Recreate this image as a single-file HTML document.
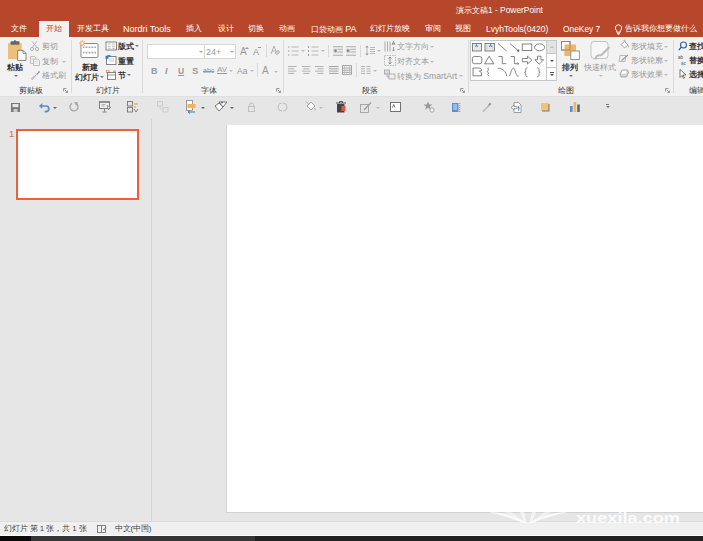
<!DOCTYPE html>
<html><head><meta charset="utf-8">
<style>
html,body{margin:0;padding:0}
body{width:703px;height:541px;overflow:hidden;position:relative;background:#E6E6E6;font-family:"Liberation Sans",sans-serif;}
.a{position:absolute}
.t{position:absolute;white-space:nowrap;font-size:8px;line-height:10px;color:#333;font-weight:600}
.t.L{font-weight:400}
.w{color:#fff}
.t.g{color:#999;font-weight:400}
.dd{position:absolute;width:0;height:0;border-left:2px solid transparent;border-right:2px solid transparent;border-top:2px solid #777}
.sep{position:absolute;width:1px;background:#DADADA}
svg{position:absolute;overflow:visible}
</style></head>
<body>
<!-- title bar -->
<div class="a" style="left:0;top:0;width:703px;height:37px;background:#B7472A"></div>
<div class="L t w" style="left:456px;top:5px;font-size:7.5px">演示文稿<span style="font-size:8.4px">1 - PowerPoint</span></div>
<!-- active tab -->
<div class="a" style="left:39px;top:21px;width:30px;height:17px;background:#F2F2F2"></div>
<div class="L t w" style="left:11px;top:24px">文件</div>
<div class="L t" style="left:46px;top:24px;color:#B7472A">开始</div>
<div class="L t w" style="left:77px;top:24px">开发工具</div>
<div class="L t w" style="left:123px;top:24px;font-size:9px">Nordri Tools</div>
<div class="L t w" style="left:186px;top:24px">插入</div>
<div class="L t w" style="left:218px;top:24px">设计</div>
<div class="L t w" style="left:248px;top:24px">切换</div>
<div class="L t w" style="left:279px;top:24px">动画</div>
<div class="L t w" style="left:311px;top:24px">口袋动画 <span style="font-size:9px;font-weight:400">PA</span></div>
<div class="L t w" style="left:370px;top:24px">幻灯片放映</div>
<div class="L t w" style="left:425px;top:24px">审阅</div>
<div class="L t w" style="left:455px;top:24px">视图</div>
<div class="L t w" style="left:486px;top:24px;font-size:8.5px">LvyhTools(0420)</div>
<div class="L t w" style="left:563px;top:24px;font-size:8.4px">OneKey 7</div>
<div class="L t w" style="left:625px;top:24px">告诉我你想要做什么</div>

<!-- ribbon -->
<div class="a" style="left:0;top:37px;width:703px;height:59px;background:#F2F2F2"></div>
<div class="a" style="left:0;top:96px;width:703px;height:1px;background:#E0E0E0"></div>


<svg style="left:614px;top:24px" width="9" height="11" viewBox="0 0 9 11"><path d="M4.5 0.8a3.2 3.2 0 0 0-1.8 5.8v1.6h3.6v-1.6a3.2 3.2 0 0 0-1.8-5.8z" fill="none" stroke="#fff" stroke-width="1"/><path d="M3 9.3h3M3.5 10.3h2" stroke="#fff" stroke-width="0.9"/></svg>

<!-- ===== Clipboard group ===== -->
<svg style="left:7px;top:40px" width="21" height="21" viewBox="0 0 21 21">
 <rect x="1" y="3.2" width="13.8" height="16" fill="#EAC07A"/>
 <rect x="3.5" y="1.2" width="9" height="3.5" rx="0.8" fill="#666"/>
 <circle cx="8" cy="1.5" r="1.3" fill="#666"/>
 <path d="M10.7 10.4h5.3l3 3v7h-8.3z" fill="#fff" stroke="#666" stroke-width="0.8"/>
 <path d="M16 10.4v3h3" fill="none" stroke="#666" stroke-width="0.7"/>
</svg>
<div class="t" style="left:7px;top:63px">粘贴</div>
<div class="dd" style="left:14px;top:75px"></div>
<svg style="left:30px;top:41px" width="9" height="10" viewBox="0 0 9 10"><path d="M2 0.3l4.8 6.2M7 0.3l-4.8 6.2" stroke="#aaa" stroke-width="0.9" fill="none"/><circle cx="2" cy="8" r="1.6" fill="none" stroke="#aaa" stroke-width="0.9"/><circle cx="7" cy="8" r="1.6" fill="none" stroke="#aaa" stroke-width="0.9"/></svg>
<div class="t g" style="left:42px;top:42px">剪切</div>
<svg style="left:30px;top:56px" width="10" height="10" viewBox="0 0 10 10"><path d="M0.5 0.5h4l1.5 1.5v5.5h-5.5z" fill="#f4f4f4" stroke="#b0b0b0" stroke-width="0.8"/><path d="M1.5 2.5h2M1.5 4h2" stroke="#ccc" stroke-width="0.6"/><path d="M3.5 3h4.5l1.5 1.5v5h-6z" fill="#f4f4f4" stroke="#b0b0b0" stroke-width="0.8"/><path d="M4.5 5.5h3.5M4.5 7h3.5" stroke="#ccc" stroke-width="0.6"/></svg>
<div class="t g" style="left:42px;top:57px">复制</div>
<div class="dd" style="left:62px;top:61px;border-top-color:#bbb"></div>
<svg style="left:31px;top:71px" width="9" height="9" viewBox="0 0 9 9"><path d="M0.5 8.5l3.5-3.5" stroke="#c0c0c0" stroke-width="2"/><path d="M4 5l1.5-1.5M5 2.5l1.5 1.5" stroke="#aaa" stroke-width="1"/><path d="M6 3l2.5-2.5" stroke="#999" stroke-width="1.1"/><circle cx="8" cy="1" r="0.7" fill="#999"/></svg>
<div class="t g" style="left:42px;top:71px">格式刷</div>
<div class="t" style="left:19px;top:86px;color:#3a3a3a;font-weight:400">剪贴板</div>
<svg style="left:63px;top:88px" width="5" height="5" viewBox="0 0 5 5"><path d="M0.5 0.5h3M0.5 0.5v3M1.5 1.5l3 3M4.5 2.5v2h-2" stroke="#888" stroke-width="0.8" fill="none"/></svg>
<div class="sep" style="left:71px;top:40px;height:53px"></div>

<!-- ===== Slides group ===== -->
<svg style="left:78px;top:39px" width="22" height="20" viewBox="0 0 22 20">
 <rect x="3" y="4.5" width="17" height="14" rx="1.2" fill="#fff" stroke="#8a8a8a" stroke-width="1"/>
 <path d="M5 8.3h13" stroke="#aaa" stroke-width="1.6" stroke-dasharray="1 0.5"/>
 <path d="M5 13.6h13" stroke="#aaa" stroke-width="1.6" stroke-dasharray="1 0.5"/>
 <path d="M4.3 1v6.5M1 4.3h6.5M2 2l4.6 4.6M6.6 2l-4.6 4.6" stroke="#F0A060" stroke-width="0.8"/>
 <circle cx="4.3" cy="4.3" r="1.5" fill="#fff" stroke="#F0A060" stroke-width="0.7"/>
</svg>
<div class="t" style="left:82px;top:63px">新建</div>
<div class="t" style="left:75px;top:73px">幻灯片</div>
<div class="dd" style="left:100px;top:76px"></div>
<div class="t" style="left:96px;top:86px;color:#3a3a3a;font-weight:400">幻灯片</div>
<svg style="left:105px;top:41px" width="12" height="10" viewBox="0 0 12 10"><rect x="1" y="1" width="10.5" height="8" fill="#fff" stroke="#777" stroke-width="0.9"/><path d="M2.8 3h3M2.8 5.2h3M2.8 7.2h3M7 3h3M7 5.2h3M7 7.2h3" stroke="#aaa" stroke-width="0.8"/></svg>
<div class="t" style="left:118px;top:42px">版式</div>
<div class="dd" style="left:135px;top:45px"></div>
<svg style="left:105px;top:55px" width="12" height="10" viewBox="0 0 12 10"><rect x="1.5" y="1.5" width="9.5" height="8" fill="#fff" stroke="#777" stroke-width="0.9"/><path d="M4 4h5M4 6h5" stroke="#bbb" stroke-width="0.8"/><rect x="0.5" y="0.8" width="3" height="3" fill="#3C7CC4"/><path d="M2 1.5a3 3 0 0 1 4 0" stroke="#3C7CC4" stroke-width="1.2" fill="none"/></svg>
<div class="t" style="left:118px;top:57px">重置</div>
<svg style="left:106px;top:70px" width="11" height="10" viewBox="0 0 11 10"><rect x="0.5" y="0.3" width="2.5" height="2.5" fill="none" stroke="#E8946B" stroke-width="0.7"/><rect x="7" y="0.5" width="3" height="2" fill="#F0B050"/><rect x="1.5" y="2.5" width="8" height="7" fill="#fff" stroke="#777" stroke-width="0.9"/><path d="M1.5 5h8" stroke="#777" stroke-width="0.8"/></svg>
<div class="t" style="left:118px;top:71px">节</div>
<div class="dd" style="left:127px;top:74px"></div>
<div class="sep" style="left:142px;top:40px;height:53px"></div>

<!-- ===== Font group ===== -->
<div class="a" style="left:147px;top:44px;width:58px;height:15px;background:#fff;border:1px solid #D6D6D6;box-sizing:border-box"></div>
<div class="dd" style="left:199px;top:51px;border-top-color:#aaa"></div>
<div class="a" style="left:204px;top:44px;width:32px;height:15px;background:#fff;border:1px solid #D6D6D6;box-sizing:border-box"></div>
<div class="L t g" style="left:206px;top:47px;font-size:9px">24+</div>
<div class="dd" style="left:230px;top:51px;border-top-color:#aaa"></div>
<div class="L t g" style="left:240px;top:47px;font-size:10px">A</div><div class="dd" style="left:245px;top:47px;border-top:none;border-bottom:2px solid #999"></div>
<div class="L t g" style="left:253px;top:47px;font-size:9px">A</div><div class="a" style="left:258px;top:47px;width:3px;height:1px;background:#999"></div>
<div class="sep" style="left:266px;top:44px;height:13px"></div>
<svg style="left:270px;top:45px" width="10" height="11" viewBox="0 0 10 11"><path d="M1 9l3-8 3 8M2 6h4" stroke="#aaa" stroke-width="0.9" fill="none"/><path d="M5 8l3-3 2 2-3 3z" fill="#ccc" stroke="#aaa" stroke-width="0.6"/></svg>
<div class="t g" style="left:151px;top:66px;font-weight:bold;font-size:9px">B</div>
<div class="t g" style="left:165px;top:66px;font-style:italic;font-weight:bold;font-size:9px">I</div>
<div class="t g" style="left:178px;top:66px;text-decoration:underline;font-weight:bold;font-size:8.5px">U</div>
<div class="t g" style="left:192px;top:66px;font-weight:bold;font-size:9.5px">S</div>
<div class="L t g" style="left:203px;top:66px;font-size:7px;text-decoration:line-through">abc</div>
<div class="L t g" style="left:217px;top:65px;font-size:8px;text-decoration:underline">AV</div>
<div class="dd" style="left:229px;top:70px;border-top-color:#bbb"></div>
<div class="L t g" style="left:237px;top:66px;font-size:8.5px">Aa</div>
<div class="dd" style="left:250px;top:70px;border-top-color:#bbb"></div>
<div class="sep" style="left:257px;top:63px;height:14px"></div>
<div class="L t g" style="left:262px;top:66px;font-size:10px">A</div>
<div class="dd" style="left:274px;top:71px;border-top-color:#bbb"></div>
<div class="t" style="left:201px;top:86px;color:#3a3a3a;font-weight:400">字体</div>
<svg style="left:276px;top:88px" width="5" height="5" viewBox="0 0 5 5"><path d="M0.5 0.5h3M0.5 0.5v3M1.5 1.5l3 3M4.5 2.5v2h-2" stroke="#888" stroke-width="0.8" fill="none"/></svg>
<div class="sep" style="left:283px;top:40px;height:53px"></div>


<!-- ===== Paragraph group ===== -->
<svg style="left:288px;top:46px" width="11" height="10" viewBox="0 0 11 10"><path d="M0 1h1.5M0 5h1.5M0 9h1.5" stroke="#999" stroke-width="1.1"/><path d="M3.5 1h7M3.5 5h7M3.5 9h7" stroke="#aaa" stroke-width="0.8"/></svg>
<div class="dd" style="left:301px;top:50px;border-top-color:#bbb"></div>
<svg style="left:308px;top:46px" width="11" height="10" viewBox="0 0 11 10"><path d="M0.5 0v2M0.5 4v2M0.5 8v2" stroke="#999" stroke-width="1"/><path d="M3.5 1h7M3.5 5h7M3.5 9h7" stroke="#aaa" stroke-width="0.8"/></svg>
<div class="dd" style="left:321px;top:50px;border-top-color:#bbb"></div>
<div class="sep" style="left:328px;top:45px;height:12px"></div>
<svg style="left:333px;top:46px" width="10" height="10" viewBox="0 0 10 10"><rect x="0" y="0" width="10" height="10" fill="#ECECEC"/><path d="M0 0.7h10M4.5 3.3h5.5M4.5 6h5.5M0 9.3h10" stroke="#aaa" stroke-width="0.9"/><circle cx="2.2" cy="4.7" r="2" fill="#bbb"/><path d="M3.3 3.2l-2 1.5 2 1.5z" fill="#777"/></svg>
<svg style="left:346px;top:46px" width="10" height="10" viewBox="0 0 10 10"><rect x="0" y="0" width="10" height="10" fill="#ECECEC"/><path d="M0 0.7h10M4.5 3.3h5.5M4.5 6h5.5M0 9.3h10" stroke="#aaa" stroke-width="0.9"/><circle cx="2.2" cy="4.7" r="2" fill="#bbb"/><path d="M1.2 3.2l2 1.5-2 1.5z" fill="#777"/></svg>
<div class="sep" style="left:360px;top:45px;height:12px"></div>
<svg style="left:365px;top:45px" width="10" height="11" viewBox="0 0 10 11"><path d="M2 1v9" stroke="#aaa" stroke-width="0.9"/><path d="M0.3 2.5l1.7-2 1.7 2zM0.3 8.5l1.7 2 1.7-2z" fill="#999"/><path d="M5 2.5h5M5 4.5h5M5 6.5h5M5 8.5h5" stroke="#aaa" stroke-width="0.8"/></svg>
<div class="dd" style="left:377px;top:50px;border-top-color:#bbb"></div>
<svg style="left:288px;top:66px" width="9" height="8" viewBox="0 0 9 8"><path d="M0 0.5h8.5M0 2.8h6M0 5.1h8.5M0 7.4h6" stroke="#aaa" stroke-width="0.9"/></svg>
<svg style="left:302px;top:66px" width="9" height="8" viewBox="0 0 9 8"><path d="M0 0.5h8.5M1.3 2.8h6M0 5.1h8.5M1.3 7.4h6" stroke="#aaa" stroke-width="0.9"/></svg>
<svg style="left:315px;top:66px" width="9" height="8" viewBox="0 0 9 8"><path d="M0 0.5h8.5M2.5 2.8h6M0 5.1h8.5M2.5 7.4h6" stroke="#aaa" stroke-width="0.9"/></svg>
<svg style="left:329px;top:66px" width="10" height="8" viewBox="0 0 10 8"><path d="M0 0.5h9.5M0 2.8h9.5M0 5.1h9.5M0 7.4h9.5" stroke="#999" stroke-width="0.9"/></svg>
<svg style="left:342px;top:65px" width="10" height="10" viewBox="0 0 10 10"><rect x="0.5" y="0.5" width="9" height="9" fill="#eee" stroke="#999" stroke-width="0.8"/><path d="M0.5 3h9M0.5 5.2h9M0.5 7.4h9" stroke="#999" stroke-width="0.8"/><path d="M2.5 0v10M7.5 0v10" stroke="#bbb" stroke-width="0.7"/></svg>
<div class="sep" style="left:356px;top:63px;height:14px"></div>
<svg style="left:361px;top:66px" width="10" height="8" viewBox="0 0 10 8"><path d="M0 0.5h4M0 2.8h4M0 5.1h4M0 7.4h4M5.5 0.5h4M5.5 2.8h4M5.5 5.1h4M5.5 7.4h4" stroke="#aaa" stroke-width="0.9"/></svg>
<div class="dd" style="left:373px;top:70px;border-top-color:#bbb"></div>
<svg style="left:384px;top:41px" width="12" height="11" viewBox="0 0 12 11"><path d="M1 0.5v10M3.5 0.5v10M6 0.5v10" stroke="#999" stroke-width="0.8"/><path d="M8 4l1.5-3.5 1.5 3.5M8.5 3h2" stroke="#777" stroke-width="0.8" fill="none"/><path d="M9.5 6v4M8.3 8.8l1.2 1.2 1.2-1.2" stroke="#777" stroke-width="0.7" fill="none"/></svg>
<div class="t g" style="left:397px;top:42px">文字方向</div>
<div class="dd" style="left:430px;top:46px;border-top-color:#bbb"></div>
<svg style="left:384px;top:55px" width="12" height="11" viewBox="0 0 12 11"><rect x="0.5" y="0.5" width="11" height="10" fill="none" stroke="#aaa" stroke-width="0.8" stroke-dasharray="1.5 1"/><path d="M6 2v7M4.5 3.5l1.5-1.5 1.5 1.5M4.5 7.5l1.5 1.5 1.5-1.5" stroke="#777" stroke-width="0.8" fill="none"/></svg>
<div class="t g" style="left:397px;top:57px">对齐文本</div>
<div class="dd" style="left:430px;top:61px;border-top-color:#bbb"></div>
<svg style="left:384px;top:69px" width="12" height="11" viewBox="0 0 12 11"><rect x="0.5" y="1" width="5" height="4" fill="#ddd" stroke="#999" stroke-width="0.7"/><rect x="5" y="5" width="6" height="5" fill="#eee" stroke="#999" stroke-width="0.7"/><path d="M3 5v3h2" stroke="#999" stroke-width="0.7" fill="none"/></svg>
<div class="t g" style="left:397px;top:71px">转换为 <span style="font-size:8.6px;font-weight:400">SmartArt</span></div>
<div class="dd" style="left:459px;top:75px;border-top-color:#bbb"></div>
<div class="t" style="left:362px;top:86px;color:#3a3a3a;font-weight:400">段落</div>
<svg style="left:460px;top:88px" width="5" height="5" viewBox="0 0 5 5"><path d="M0.5 0.5h3M0.5 0.5v3M1.5 1.5l3 3M4.5 2.5v2h-2" stroke="#888" stroke-width="0.8" fill="none"/></svg>
<div class="sep" style="left:468px;top:40px;height:53px"></div>

<!-- ===== Drawing group ===== -->
<div class="a" style="left:470px;top:40px;width:87px;height:41px;background:#fff;border:1px solid #C6C6C6;box-sizing:border-box"></div>
<div class="a" style="left:546px;top:40px;width:11px;height:41px;background:#fff;border:1px solid #C6C6C6;box-sizing:border-box"></div>
<div class="a" style="left:547px;top:41px;width:9px;height:12px;background:#E3E3E3"></div>
<div class="a" style="left:546px;top:53px;width:11px;height:1px;background:#C6C6C6"></div>
<div class="a" style="left:546px;top:67px;width:11px;height:1px;background:#C6C6C6"></div>
<div class="dd" style="left:549.5px;top:46px;border-top:none;border-bottom:2px solid #bbb"></div>
<div class="dd" style="left:549.5px;top:60px;border-top-color:#555"></div>
<div class="a" style="left:549.5px;top:72px;width:4px;height:1px;background:#555"></div>
<div class="dd" style="left:549.5px;top:74px;border-top-color:#555"></div>
<svg style="left:471px;top:41px" width="76" height="39" viewBox="0 0 76 39">
 <g fill="none" stroke="#666" stroke-width="0.8">
  <rect x="1.4" y="2.4" width="9" height="7.6" fill="#E8E8E8"/><path d="M4.5 6l1-2.5 1 2.5" stroke="#2E75C4" stroke-width="0.9"/>
  <rect x="14" y="2.4" width="9.4" height="7.6" fill="#E8E8E8"/><path d="M18.5 6l1-2.5 1 2.5" stroke="#2E75C4" stroke-width="0.9"/><path d="M16 4v5M21.5 4v5" stroke="#bbb" stroke-width="0.6"/>
  <path d="M27 2.5l8.6 7.5"/>
  <path d="M39 2.5l8.6 7.5"/><path d="M46.2 10l1.8 0.4-0.4-1.8z" fill="#444"/>
  <rect x="51.2" y="3" width="9.6" height="6.6"/>
  <ellipse cx="68.6" cy="6.3" rx="5" ry="3.4"/>
  <rect x="1.4" y="15.5" width="9.4" height="7.2" rx="2"/>
  <path d="M13.6 22.8l4.6-7.6 4.6 7.6z"/>
  <path d="M27.5 15.5h3.8v7.2h4"/>
  <path d="M39.6 15.5h3.8v7.2h4"/><path d="M46.5 21.7l1.2 1-1.2 1" stroke-width="0.9"/>
  <path d="M51.3 17.5h5.2v-2.3l4.3 3.9-4.3 3.9v-2.3h-5.2z"/>
  <path d="M66.5 15.2h3.4v3.6h2.7l-4.4 4.4-4.4-4.4h2.7z"/>
  <path d="M2 34.8v-7.8h5.5c2 0 3 1 3 2.5l-2.2 0.6 2.2 1.5v3.2z"/>
  <path d="M17.7 26.5c-2 1.5 1 2-1 3.5s2.5 1 0.5 2.8c-1.5 1.2 1 2 1 2.5"/>
  <path d="M26.8 27.2c4.5 0 8.8 3.5 8.8 8"/>
  <path d="M38.5 35c1.5-4 2.5-8 4-8s2.5 8 4 8h1.2"/>
  <path d="M56.5 26.8c-1.8 0-1.8 1-1.8 3.2 0 1-0.6 1.3-1.2 1.3 0.6 0 1.2 0.3 1.2 1.3 0 2.2 0 3.2 1.8 3.2"/>
  <path d="M66.2 26.8c1.8 0 1.8 1 1.8 3.2 0 1 0.6 1.3 1.2 1.3-0.6 0-1.2 0.3-1.2 1.3 0 2.2 0 3.2-1.8 3.2"/>
 </g>
</svg>
<svg style="left:560px;top:40px" width="21" height="21" viewBox="0 0 21 21"><rect x="1.5" y="1.5" width="8.5" height="8.5" fill="#fff" stroke="#888" stroke-width="0.9"/><rect x="4.5" y="4.5" width="11.5" height="11.5" fill="#F2B460"/><rect x="1.5" y="1.5" width="8.5" height="8.5" fill="none" stroke="#888" stroke-width="0.9"/><rect x="10.8" y="11" width="8.5" height="8.5" fill="#fff" stroke="#888" stroke-width="0.9"/></svg>
<div class="t" style="left:562px;top:63px">排列</div>
<div class="dd" style="left:569px;top:75px"></div>
<svg style="left:590px;top:40px" width="22" height="22" viewBox="0 0 22 22"><rect x="1" y="1.5" width="17" height="17" rx="3" fill="#f7f7f7" stroke="#c4c4c4" stroke-width="1"/><path d="M11 15.5l8.5-8.5" stroke="#bbb" stroke-width="2.2"/><path d="M5.5 19.5c0-3 2-5 5.5-4" stroke="#bbb" stroke-width="2" fill="none"/></svg>
<div class="t g" style="left:584px;top:63px">快速样式</div>
<div class="dd" style="left:599px;top:75px;border-top-color:#bbb"></div>
<svg style="left:620px;top:40px" width="9" height="9" viewBox="0 0 9 9"><path d="M1 4.5l3.5-3 3.5 3.5-3.5 3z" fill="#fff" stroke="#999" stroke-width="0.9"/><path d="M3.5 0.5a1 1 0 0 1 1.5 1.5" fill="none" stroke="#999" stroke-width="0.8"/><path d="M8.3 5.5c0.5 0.8 0.6 1.4 0.2 1.8" stroke="#999" stroke-width="0.9" fill="none"/></svg>
<div class="t g" style="left:631px;top:42px">形状填充</div>
<div class="dd" style="left:664px;top:46px;border-top-color:#bbb"></div>
<svg style="left:618px;top:54px" width="11" height="9" viewBox="0 0 11 9"><path d="M2 1.5h6l-1 6h-6z" fill="none" stroke="#aaa" stroke-width="0.8"/><path d="M3.5 6.5l6.5-5.5" stroke="#999" stroke-width="1.1"/></svg>
<div class="t g" style="left:631px;top:56px">形状轮廓</div>
<div class="dd" style="left:664px;top:60px;border-top-color:#bbb"></div>
<svg style="left:619px;top:69px" width="10" height="9" viewBox="0 0 10 9"><path d="M1 5l2-4h5.5l1 2.5-2 4.5h-5.5z" fill="#d6d6d6" stroke="#999" stroke-width="0.8"/><path d="M2.2 4.5l1.5-2.8h4.3l-1.3 3z" fill="#fff"/></svg>
<div class="t g" style="left:631px;top:70px">形状效果</div>
<div class="dd" style="left:664px;top:74px;border-top-color:#bbb"></div>
<div class="t" style="left:558px;top:86px;color:#3a3a3a;font-weight:400">绘图</div>
<svg style="left:665px;top:88px" width="5" height="5" viewBox="0 0 5 5"><path d="M0.5 0.5h3M0.5 0.5v3M1.5 1.5l3 3M4.5 2.5v2h-2" stroke="#888" stroke-width="0.8" fill="none"/></svg>
<div class="sep" style="left:673px;top:40px;height:53px"></div>

<!-- ===== Editing group ===== -->
<svg style="left:678px;top:41px" width="10" height="10" viewBox="0 0 10 10"><circle cx="5.5" cy="4" r="3" fill="none" stroke="#2E62A8" stroke-width="1.1"/><path d="M3.3 6.2l-2.5 3" stroke="#2E62A8" stroke-width="1.3"/></svg>
<div class="t" style="left:689px;top:42px">查找</div>
<svg style="left:678px;top:55px" width="10" height="10" viewBox="0 0 10 10"><text x="0" y="4" font-size="4.5" fill="#444" font-family="Liberation Sans">ab</text><text x="3" y="9.5" font-size="4.5" fill="#2E62A8" font-family="Liberation Sans">ac</text></svg>
<div class="t" style="left:689px;top:56px">替换</div>
<svg style="left:679px;top:69px" width="9" height="10" viewBox="0 0 9 10"><path d="M1 0.5v8l2-2 1.5 3 1-0.5-1.5-3h3z" fill="#fff" stroke="#555" stroke-width="0.8"/></svg>
<div class="t" style="left:689px;top:70px">选择</div>
<div class="t" style="left:689px;top:86px;color:#3a3a3a;font-weight:400">编辑</div>


<!-- ===== QAT row ===== -->
<svg style="left:11px;top:103px" width="9" height="9" viewBox="0 0 9 9"><path d="M0 0h9v9h-9z" fill="#7a7a7a"/><rect x="1.5" y="1" width="6" height="3.2" fill="#e6e6e6"/><rect x="2.5" y="6" width="4" height="3" fill="#ccc"/></svg>
<svg style="left:39px;top:102px" width="11" height="11" viewBox="0 0 11 11"><path d="M2.5 4h4.5a2.8 2.8 0 0 1 0 5.6h-1.5" fill="none" stroke="#5B8BC9" stroke-width="1.7"/><path d="M0 4l3.3-3v6z" fill="#5B8BC9"/></svg>
<div class="dd" style="left:53px;top:107px;border-top-color:#666"></div>
<svg style="left:69px;top:102px" width="10" height="10" viewBox="0 0 10 10"><path d="M6.8 1.3a4 4 0 1 1-3.8 0.1" fill="none" stroke="#a8a8a8" stroke-width="1.4"/><path d="M5 0l4 0.3-1.8 3.5z" fill="#a8a8a8"/></svg>
<svg style="left:99px;top:101px" width="13" height="12" viewBox="0 0 13 12"><rect x="0.5" y="1" width="10" height="6.5" fill="#eee" stroke="#777" stroke-width="0.9"/><path d="M0 1h11" stroke="#777" stroke-width="1.2"/><path d="M2.5 3.5h4M2.5 5h3" stroke="#999" stroke-width="0.7"/><path d="M5.5 7.5v3M3.5 11h4" stroke="#777" stroke-width="0.9"/><path d="M8 4.5l4 2-2 0.5-0.5 2z" fill="#fff" stroke="#777" stroke-width="0.7"/></svg>
<svg style="left:127px;top:101px" width="12" height="12" viewBox="0 0 12 12"><rect x="0.5" y="0.5" width="5" height="4.5" fill="none" stroke="#777" stroke-width="0.9"/><rect x="0.5" y="6.5" width="5" height="4.5" fill="none" stroke="#777" stroke-width="0.9"/><path d="M7 3h4M7 6h2" stroke="#E8943B" stroke-width="1"/><path d="M7 8l2 3 2-3" stroke="#777" stroke-width="0.9" fill="none"/></svg>
<svg style="left:157px;top:101px" width="12" height="12" viewBox="0 0 12 12"><rect x="0.5" y="0.5" width="5" height="4.5" fill="none" stroke="#ccc" stroke-width="0.9"/><rect x="6" y="6.5" width="5" height="4.5" fill="none" stroke="#ccc" stroke-width="0.9"/><path d="M3 5v3h3" stroke="#ccc" stroke-width="0.8" fill="none"/></svg>
<svg style="left:185px;top:100px" width="12" height="14" viewBox="0 0 12 14"><rect x="1.5" y="0.5" width="6" height="10" fill="#fff" stroke="#888" stroke-width="0.8"/><rect x="2.5" y="4" width="8" height="4" fill="#F1B45B"/><path d="M3 12h7M3 12l2-1.5M3 12l2 1.5" stroke="#3C7CC4" stroke-width="1" fill="none"/></svg>
<div class="dd" style="left:201px;top:107px;border-top-color:#666"></div>
<svg style="left:214px;top:101px" width="14" height="12" viewBox="0 0 14 12"><path d="M5 1l8 0-4 5z" fill="#fff" stroke="#666" stroke-width="0.9"/><path d="M1 5l4-3 4 4-4 4z" fill="#fff" stroke="#666" stroke-width="0.9"/><circle cx="8" cy="1.5" r="1" fill="#3C7CC4"/></svg>
<div class="dd" style="left:230px;top:107px;border-top-color:#666"></div>
<svg style="left:248px;top:102px" width="7" height="10" viewBox="0 0 7 10"><rect x="0.5" y="4.5" width="6" height="5" fill="none" stroke="#bbb" stroke-width="0.9"/><path d="M1.5 4.5v-1.5a2 2 0 0 1 4 0v1.5" fill="none" stroke="#bbb" stroke-width="0.9"/></svg>
<svg style="left:278px;top:102px" width="9" height="10" viewBox="0 0 9 10"><path d="M4 1a4 4 0 0 0 0 8M5 1a4 4 0 0 1 0 8" fill="none" stroke="#bbb" stroke-width="0.9"/></svg>
<svg style="left:305px;top:101px" width="11" height="12" viewBox="0 0 11 12"><path d="M2 5l4-4 4 4-4 4z" fill="#fff" stroke="#999" stroke-width="0.9"/><path d="M9.5 7c0.7 1.2 1 2 0.3 2.5" stroke="#999" stroke-width="0.8" fill="none"/><path d="M1 0.5l3 3" stroke="#999" stroke-width="0.8"/></svg>
<div class="dd" style="left:319px;top:107px;border-top-color:#bbb"></div>
<svg style="left:336px;top:101px" width="10" height="12" viewBox="0 0 10 12"><rect x="1" y="3" width="7.5" height="8.5" fill="#444"/><path d="M0 2h10M3.5 2v-1.5h3v1.5" stroke="#444" stroke-width="0.9" fill="none"/><rect x="5.5" y="5" width="4" height="5" fill="#E05A3A"/></svg>
<svg style="left:360px;top:102px" width="12" height="11" viewBox="0 0 12 11"><rect x="0.5" y="2.5" width="8" height="8" fill="none" stroke="#999" stroke-width="0.8"/><path d="M4 8l7-7.5" stroke="#999" stroke-width="1.1"/></svg>
<div class="dd" style="left:376px;top:107px;border-top-color:#bbb"></div>
<svg style="left:390px;top:102px" width="11" height="10" viewBox="0 0 11 10"><rect x="0.5" y="0.5" width="10" height="9" fill="#fff" stroke="#666" stroke-width="0.9"/><path d="M2.5 5.5l1.2-3 1.2 3" stroke="#555" stroke-width="0.8" fill="none"/></svg>
<svg style="left:423px;top:101px" width="12" height="12" viewBox="0 0 12 12"><path d="M5 0.5l1.3 3h3.2l-2.6 2 1 3.2-2.9-2-2.9 2 1-3.2-2.6-2h3.2z" fill="#999"/><circle cx="9" cy="9" r="2.2" fill="#eee" stroke="#999" stroke-width="0.8"/></svg>
<svg style="left:452px;top:103px" width="9" height="10" viewBox="0 0 9 10"><rect x="0" y="0" width="6.5" height="9" fill="#5B8FD5"/><path d="M1.2 2h4M1.2 4h4M1.2 6h4" stroke="#fff" stroke-width="0.8"/><path d="M7.8 0v9" stroke="#E07060" stroke-width="1" stroke-dasharray="1 1"/></svg>
<svg style="left:482px;top:102px" width="10" height="10" viewBox="0 0 10 10"><path d="M1 9.5l6-6" stroke="#aaa" stroke-width="1.6"/><path d="M6 2.5l2-2 1.5 1.5-2 2z" fill="#999"/><path d="M1.5 9l4.5-4.5" stroke="#eee" stroke-width="0.6"/></svg>
<svg style="left:510px;top:102px" width="12" height="11" viewBox="0 0 12 11"><path d="M4 0.5h4.5l2.5 2.5v7.5h-7z" fill="#fff" stroke="#888" stroke-width="0.8"/><path d="M1 5.5l3-2.5v1.5h3v2h-3v1.5z" fill="#fff" stroke="#888" stroke-width="0.8"/><path d="M8 4.5a2.5 2.5 0 0 1 0 4" stroke="#3C7CC4" stroke-width="1.1" fill="none"/></svg>
<svg style="left:541px;top:103px" width="9" height="9" viewBox="0 0 9 9"><rect x="1" y="1" width="7.5" height="7.5" fill="#777"/><rect x="0" y="0" width="7.5" height="7.5" fill="#F0C27A"/></svg>
<svg style="left:570px;top:102px" width="10" height="10" viewBox="0 0 10 10"><rect x="0" y="4" width="2.6" height="6" fill="#5B8FD5"/><rect x="3.6" y="0" width="2.6" height="10" fill="#F0B860"/><rect x="7.2" y="2.5" width="2.6" height="7.5" fill="#666"/></svg>
<div class="a" style="left:606px;top:104px;width:3px;height:1px;background:#777"></div>
<div class="dd" style="left:605.5px;top:106px;border-top-color:#777"></div>

<!-- ===== Left panel ===== -->
<div class="sep" style="left:151px;top:119px;height:402px;background:#D4D4D4"></div>
<div class="L t" style="left:9px;top:129px;color:#DA6A50;font-size:9.5px">1</div>
<div class="a" style="left:16px;top:129px;width:123px;height:71px;background:#fff;border:2px solid #EC603B;box-sizing:border-box"></div>

<!-- ===== Slide ===== -->
<div class="a" style="left:226px;top:125px;width:477px;height:388px;background:#D2D2D2"></div>
<div class="a" style="left:227px;top:125px;width:476px;height:387px;background:#fff"></div>

<!-- ===== Status bar ===== -->
<div class="a" style="left:0;top:521px;width:703px;height:15px;background:#F0F0F0;border-top:1px solid #DCDCDC;box-sizing:border-box"></div>
<div class="L t" style="left:4px;top:524px;color:#444;font-size:8px;letter-spacing:-0.1px">幻灯片 第 1 张，共 1 张</div>
<svg style="left:97px;top:525px" width="10" height="8" viewBox="0 0 10 8"><rect x="0.5" y="0.5" width="8" height="7" fill="none" stroke="#666" stroke-width="0.8"/><path d="M4.5 0.5v7M6 4l1 1 2-3" stroke="#666" stroke-width="0.8" fill="none"/></svg>
<div class="L t" style="left:115px;top:524px;color:#444;letter-spacing:-0.2px">中文(中国)</div>
<div class="a" style="left:0;top:535px;width:703px;height:1px;background:#fff"></div>

<!-- ===== Taskbar ===== -->
<div class="a" style="left:0;top:536px;width:703px;height:5px;background:#222"></div>
<div class="a" style="left:0;top:536px;width:31px;height:5px;background:#0a0a0a"></div>
<div class="a" style="left:31px;top:536px;width:224px;height:5px;background:#363636"></div>

<!-- ===== Watermark ===== -->
<svg style="left:486px;top:512px" width="196" height="12" viewBox="0 0 196 12">
 <g fill="#fff" opacity="0.8">
  <path d="M2 0c14 0 28 4 40 11h-5c-10-5-22-8-35-11z"/>
  <path d="M82 0c-14 0-28 4-40 11h5c10-5 22-8 35-11z"/>
  <path d="M34 0h4l3 11h-3z" opacity="0.7"/>
  <path d="M50 0h-4l-3 11h3z" opacity="0.7"/>
  <path d="M18 0h8l10 9z" opacity="0.5"/>
  <path d="M66 0h-8l-10 9z" opacity="0.5"/>
 </g>
 <text x="90" y="11" font-family="Liberation Sans" font-weight="bold" font-size="14.5" fill="#fff" opacity="0.85" textLength="104" lengthAdjust="spacingAndGlyphs">xuexila.com</text>
</svg>

</body></html>
